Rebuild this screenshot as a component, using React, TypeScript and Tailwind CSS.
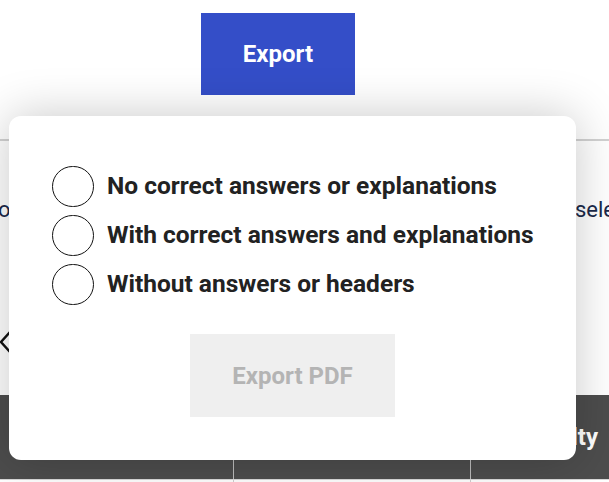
import React from "react";

const options = [
  "No correct answers or explanations",
  "With correct answers and explanations",
  "Without answers or headers",
];

export default function App() {
  return (
    <div
      className="relative w-[609px] h-[482px] overflow-hidden bg-white"
      style={{ fontFamily: "Roboto, 'Liberation Sans', sans-serif" }}
    >
      {/* background page */}
      <div className="pt-[13px] pl-[201px]">
        <button className="w-[154px] h-[82px] bg-[#344ec8] text-white font-bold text-[24px]">
          Export
        </button>
      </div>
      <div className="mt-[44px] h-[2px] bg-[#d2d2d2]" />
      <div className="flex items-center h-[30px] mt-[53px] text-[22px] text-[#1b2a4a] whitespace-nowrap">
        <span className="w-[577px] shrink-0 -ml-[2px]">o</span>
        <span className="shrink-0">select all</span>
      </div>
      <div className="mt-[106px] h-[24px] flex items-center">
        <svg width="12" height="24" viewBox="0 0 12 24">
          <polyline points="10,2 1,12 10,22" fill="none" stroke="#111" strokeWidth="2.5" />
        </svg>
      </div>
      <div className="mt-[41px] h-[84px] bg-[#4d4d4d] grid grid-cols-[234px_237px_1fr] text-white font-bold text-[24px]">
        <div className="border-r border-[#bdbdbd]" />
        <div className="border-r border-[#bdbdbd]" />
        <div className="flex items-center justify-end pr-[11px]">Difficulty</div>
      </div>
      <div className="h-[1px] bg-[#d9d9d9]" />
      <div className="grid grid-cols-[234px_237px_1fr] h-[10px]">
        <div className="border-r border-[#d0d0d0]" />
        <div className="border-r border-[#d0d0d0]" />
        <div />
      </div>

      {/* modal */}
      <div className="absolute left-[9px] top-[116px] w-[567px] h-[344px] bg-white rounded-[12px] shadow-[0_0_48px_rgba(0,0,0,0.22)] flex flex-col">
        <div className="pl-[43px] pt-[50px] flex flex-col gap-[8px]">
          {options.map((o) => (
            <label key={o} className="flex items-center gap-[13px] h-[41px]">
              <span className="w-[42px] h-[41px] rounded-full border border-[#111] shrink-0" />
              <span className="text-[24.5px] font-bold text-[#222] whitespace-nowrap">{o}</span>
            </label>
          ))}
        </div>
        <div className="flex justify-center mt-[29px]">
          <button className="w-[205px] h-[83px] bg-[#efefef] text-[#b4b4b4] font-bold text-[24px]">
            Export PDF
          </button>
        </div>
      </div>
    </div>
  );
}
